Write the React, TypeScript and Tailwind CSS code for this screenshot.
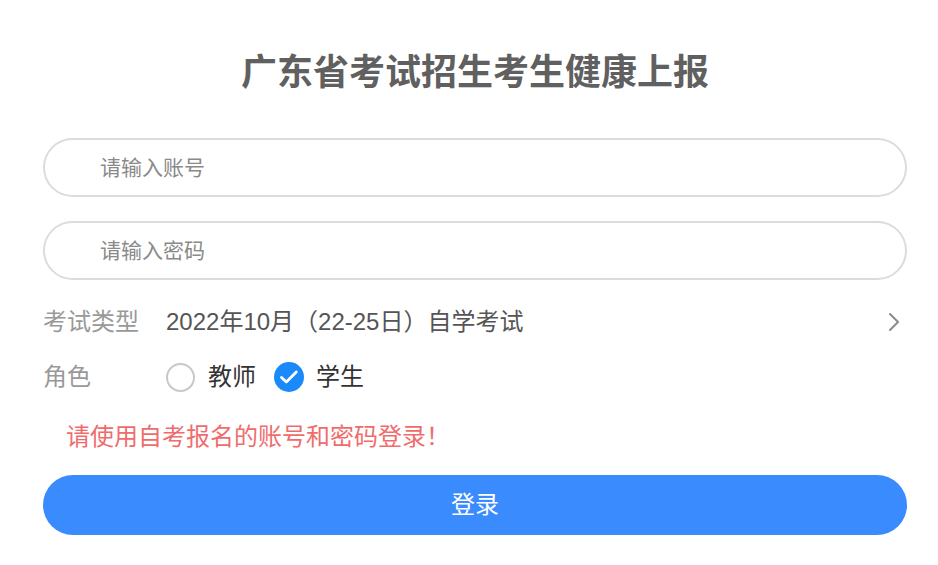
import React, { useState } from 'react';

type Role = 'teacher' | 'student';

function ChevronRight() {
  return (
    <svg width="14" height="22" viewBox="0 0 14 22" fill="none" className="mr-[6px]">
      <path d="M3 3l8 8-8 8" stroke="#8a8a8a" strokeWidth="2" strokeLinecap="round" strokeLinejoin="round" />
    </svg>
  );
}

function RadioDot({ checked }: { checked: boolean }) {
  if (!checked) {
    return <span className="w-[29px] h-[29px] rounded-full border-2 border-[#c8c8c8] bg-white shrink-0" />;
  }
  return (
    <span className="w-[30px] h-[30px] rounded-full bg-[#1a89fa] flex items-center justify-center shrink-0">
      <svg width="20" height="20" viewBox="0 0 20 20" fill="none">
        <path d="M2.5 10.5l4.8 4.5 10-10" stroke="#fff" strokeWidth="2.8" strokeLinecap="round" strokeLinejoin="round" />
      </svg>
    </span>
  );
}

export default function App() {
  const [role, setRole] = useState<Role>('student');

  return (
    <div
      className="w-full min-h-screen bg-white pl-[43px] pr-[31px] pt-[50px]"
      style={{ fontFamily: '"Liberation Sans", "Noto Sans CJK SC", sans-serif' }}
    >
      {/* Title */}
      <h1 className="text-center text-[36px] leading-[46px] font-bold text-[#606060]">
        广东省考试招生考生健康上报
      </h1>

      {/* Inputs */}
      <div className="mt-[42px] flex flex-col gap-[24px]">
        <input
          className="w-full h-[59px] rounded-full border-2 border-[#dcdcdc] pl-[55px] text-[21px] text-[#333] placeholder:text-[#8a8a8a] outline-none"
          placeholder="请输入账号"
        />
        <input
          type="password"
          className="w-full h-[59px] rounded-full border-2 border-[#dcdcdc] pl-[55px] text-[21px] text-[#333] placeholder:text-[#8a8a8a] outline-none"
          placeholder="请输入密码"
        />
      </div>

      {/* Exam type */}
      <div className="mt-[22px] flex items-center h-[40px]">
        <span className="w-[123px] text-[24px] text-[#999]">考试类型</span>
        <span className="flex-1 text-[24px] text-[#555]">2022年10月（22-25日）自学考试</span>
        <ChevronRight />
      </div>

      {/* Role */}
      <div className="mt-[15px] flex items-center h-[40px]">
        <span className="w-[123px] text-[24px] text-[#999]">角色</span>
        <button className="flex items-center gap-[13px] mr-[18px]" onClick={() => setRole('teacher')}>
          <RadioDot checked={role === 'teacher'} />
          <span className="text-[24px] text-[#333]">教师</span>
        </button>
        <button className="flex items-center gap-[12px]" onClick={() => setRole('student')}>
          <RadioDot checked={role === 'student'} />
          <span className="text-[24px] text-[#333]">学生</span>
        </button>
      </div>

      {/* Notice */}
      <p className="mt-[20px] pl-[23px] text-[24px] leading-[40px] text-[#f06c6c]">
        请使用自考报名的账号和密码登录！
      </p>

      {/* Submit */}
      <button className="mt-[18px] w-full h-[60px] rounded-full bg-[#398bfe] text-white text-[24px]">
        登录
      </button>
    </div>
  );
}
